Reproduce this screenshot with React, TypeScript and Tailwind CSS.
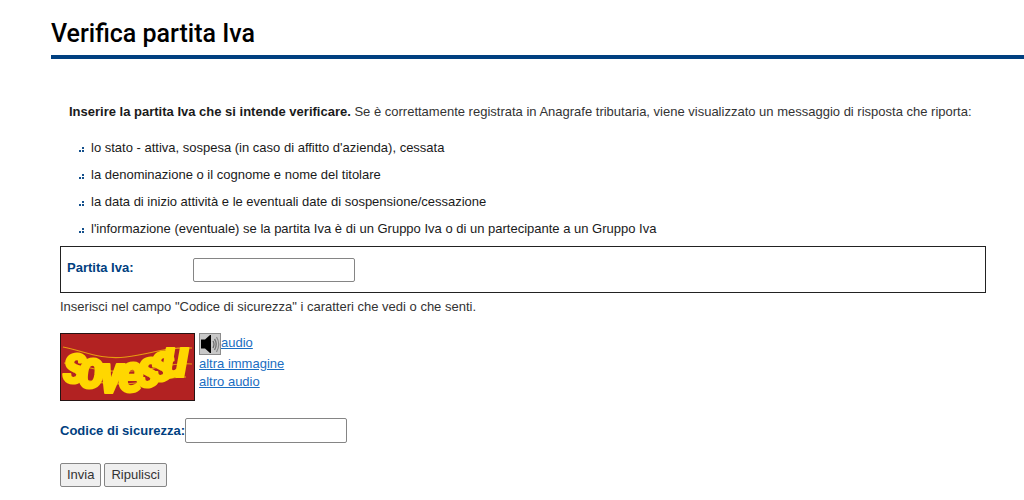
import { FormEvent, useState } from "react";

const NOTES = [
  "lo stato - attiva, sospesa (in caso di affitto d'azienda), cessata",
  "la denominazione o il cognome e nome del titolare",
  "la data di inizio attività e le eventuali date di sospensione/cessazione",
  "l'informazione (eventuale) se la partita Iva è di un Gruppo Iva o di un partecipante a un Gruppo Iva",
];

function Bullet() {
  return (
    <svg width="5" height="5" viewBox="0 0 5 5" className="mt-0.5 shrink-0 fill-[#14508c]" shapeRendering="crispEdges" aria-hidden="true">
      <rect x="3" y="0" width="2" height="2" />
      <rect x="0" y="3" width="2" height="2" />
      <rect x="3" y="3" width="2" height="2" />
    </svg>
  );
}

function CaptchaImage() {
  return (
    <svg width="135" height="68" viewBox="0 0 135 68" role="img" aria-label="Codice di sicurezza" className="shrink-0">
      <defs>
        <filter id="soft">
          <feGaussianBlur stdDeviation="0.7" />
        </filter>
      </defs>
      <rect x="0.5" y="0.5" width="134" height="67" fill="#b22222" stroke="#241414" />
      <g filter="url(#soft)">
        <path
          d="M3 14 C24 18 40 27 66 24 S104 14 132 15 M4 30 C26 33 40 40 72 38 S108 29 132 31 M8 45 C34 48 50 53 76 50 S108 44 126 44"
          fill="none"
          stroke="#e79b10"
          strokeWidth="1.2"
        />
        <text
          x="3 18 39 58 77 90 102"
          y="50 55 60 59 54 48 44"
          fill="#ffd700"
          stroke="#ffd700"
          strokeWidth="2"
          strokeLinejoin="round"
          className="font-['Roboto_Condensed','Open_Sans_Condensed','Liberation_Serif',serif] text-[56px] font-bold italic"
        >
          sovessu
        </text>
      </g>
    </svg>
  );
}

function SpeakerIcon() {
  return (
    <svg width="22" height="22" viewBox="0 0 22 22" aria-hidden="true" className="shrink-0">
      <rect x="0.5" y="0.5" width="21" height="21" fill="#c8c8c8" stroke="#8c8c8c" />
      <path d="M2 6.5 H6 L11 2 H12 V20 H11 L6 15.5 H2 Z" fill="#000" />
      <path d="M14 8 Q16 11 14 15" fill="none" stroke="#666" strokeWidth="1.2" />
      <path d="M15.5 6 Q19 11 15.5 17" fill="none" stroke="#777" strokeWidth="1.4" />
      <path d="M17.5 4 Q22 11 17.5 19" fill="none" stroke="#888" strokeWidth="1.2" />
    </svg>
  );
}

export default function App() {
  const [vat, setVat] = useState("");
  const [code, setCode] = useState("");

  const onSubmit = (e: FormEvent) => {
    e.preventDefault();
  };

  const onReset = () => {
    setVat("");
    setCode("");
  };

  const inputClass = "w-[162px] rounded-xs border border-[#858585] bg-white px-1 text-[13px] text-black";
  const buttonClass = "h-6 rounded-xs border border-[#858585] bg-[#efefef] px-1.5 text-[#333]";
  const linkClass = "text-[#1b6ec2] underline";

  return (
    <main className="bg-white pt-4 font-['Liberation_Sans',Arial,sans-serif] text-[13px] leading-[18px] text-[#333]">
      <header className="ml-[51px] border-b-4 border-[#004080] pb-1">
        <h1 className="font-[Roboto,sans-serif] text-[25px] leading-[35px] font-medium text-black">
          Verifica partita Iva
        </h1>
      </header>

      <form onSubmit={onSubmit} onReset={onReset} className="mr-[38px] ml-[60px] pt-11">
        <p className="pl-[9px]">
          <strong className="text-[#1a1a1a]">Inserire la partita Iva che si intende verificare.</strong> Se è
          correttamente registrata in Anagrafe tributaria, viene visualizzato un messaggio di risposta che riporta:
        </p>

        <ul className="mt-[18px] space-y-[9px] pl-[19px] text-[#1a1a1a]">
          {NOTES.map((note) => (
            <li key={note} className="flex items-center gap-[7px]">
              <Bullet />
              {note}
            </li>
          ))}
        </ul>

        <div className="mt-2 flex h-[47px] items-center border border-[#222] pl-1.5">
          <label htmlFor="vat" className="mb-1 w-[126px] font-bold text-[#004080]">
            Partita Iva:
          </label>
          <input id="vat" type="text" value={vat} onChange={(e) => setVat(e.target.value)} className={`h-6 ${inputClass}`} />
        </div>

        <p className="mt-[5px]">Inserisci nel campo "Codice di sicurezza" i caratteri che vedi o che senti.</p>

        <div className="mt-[17px] flex gap-1">
          <CaptchaImage />
          <div className="flex flex-col items-start">
            <a href="#audio" className={`flex leading-5 ${linkClass}`}>
              <SpeakerIcon />
              audio
            </a>
            <a href="#altra-immagine" className={linkClass}>
              altra immagine
            </a>
            <a href="#altro-audio" className={linkClass}>
              altro audio
            </a>
          </div>
        </div>

        <div className="mt-[17px] flex items-center">
          <label htmlFor="code" className="font-bold text-[#004080]">
            Codice di sicurezza:
          </label>
          <input id="code" type="text" value={code} onChange={(e) => setCode(e.target.value)} className={`h-[25px] ${inputClass}`} />
        </div>

        <div className="mt-5 flex gap-[3px]">
          <button type="submit" className={buttonClass}>
            Invia
          </button>
          <button type="reset" className={buttonClass}>
            Ripulisci
          </button>
        </div>
      </form>
    </main>
  );
}
